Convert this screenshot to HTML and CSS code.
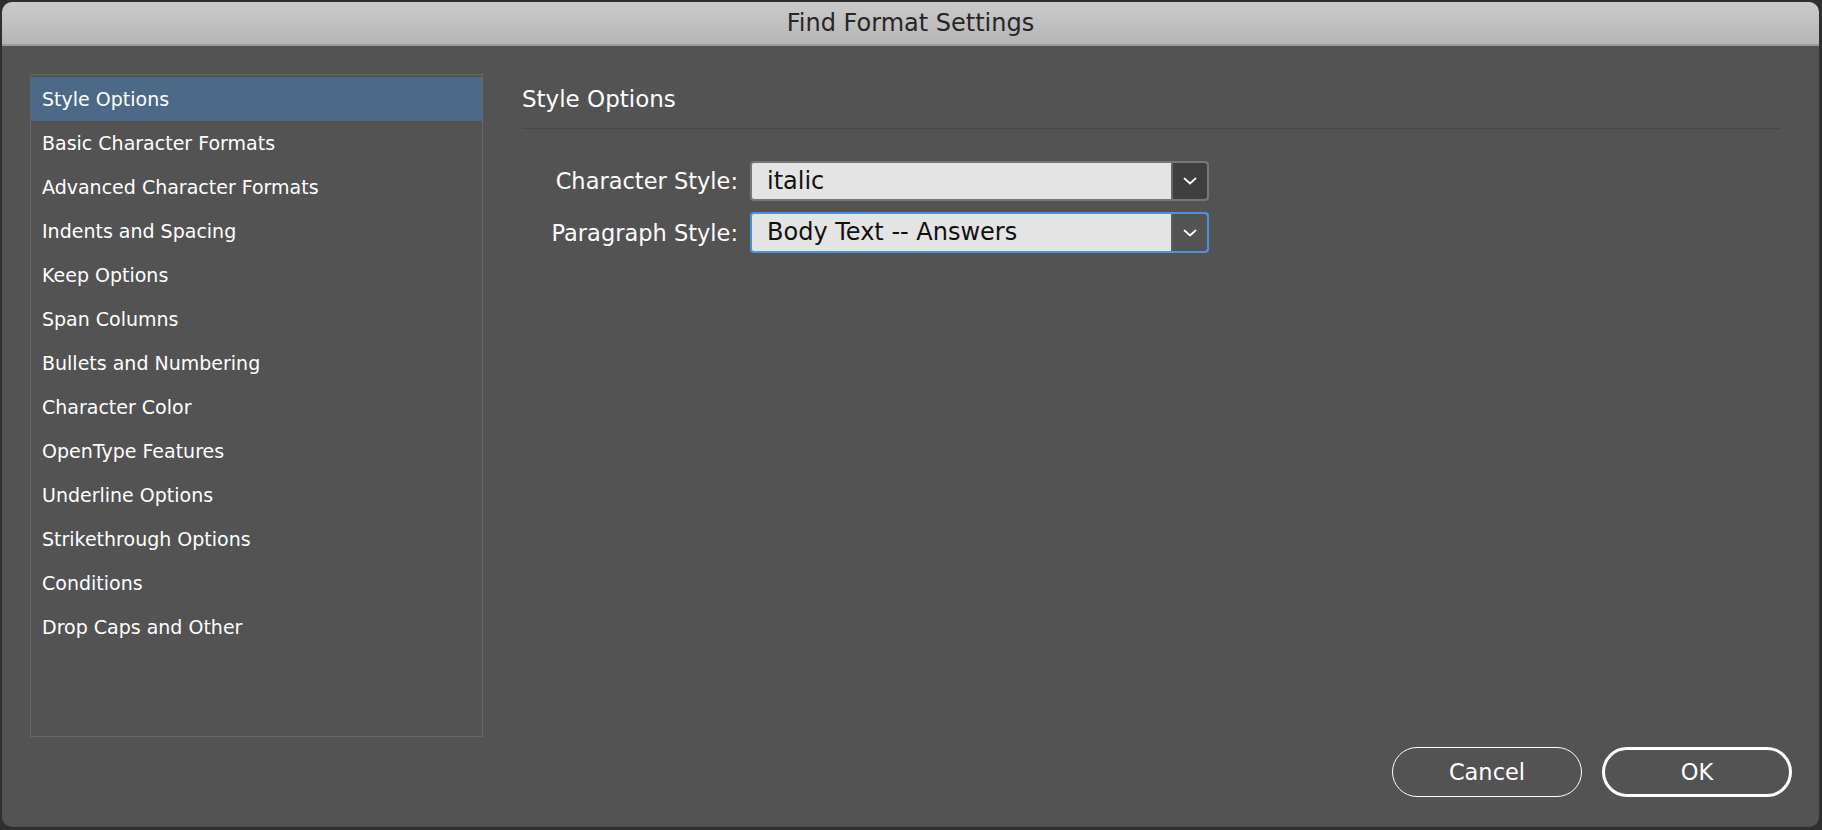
FILE: index.html
```html
<!DOCTYPE html>
<html lang="en">
<head>
    <meta charset="UTF-8">
    <meta name="viewport" content="width=device-width, initial-scale=1.0">
    <title>Find Format Settings</title>
    <link rel="stylesheet" href="styles.css">
</head>
<body>
    <div class="dialog">
        <div class="titlebar">Find Format Settings</div>
        <div class="dialog-body">
            <ul class="sidebar">
                <li class="sidebar-li active">Style Options</li>
                <li class="sidebar-li">Basic Character Formats</li>
                <li class="sidebar-li">Advanced Character Formats</li>
                <li class="sidebar-li">Indents and Spacing</li>
                <li class="sidebar-li">Keep Options</li>
                <li class="sidebar-li">Span Columns</li>
                <li class="sidebar-li">Bullets and Numbering</li>
                <li class="sidebar-li">Character Color</li>
                <li class="sidebar-li">OpenType Features</li>
                <li class="sidebar-li">Underline Options</li>
                <li class="sidebar-li">Strikethrough Options</li>
                <li class="sidebar-li">Conditions</li>
                <li class="sidebar-li">Drop Caps and Other</li>
            </ul>
            <div class="pane">
                <h2 class="pane-title">Style Options</h2>
                <div class="form">
                    <label class="form-label">Character Style:</label>
                    <div class="select">
                        <span class="select-value">italic</span>
                        <span class="select-btn">
                            <svg width="14" height="8" viewBox="0 0 14 8"><polyline points="1.5,1.5 7,6.5 12.5,1.5" fill="none" stroke="#fff" stroke-width="1.8" stroke-linecap="round" stroke-linejoin="round"/></svg>
                        </span>
                    </div>
                    <label class="form-label">Paragraph Style:</label>
                    <div class="select focus">
                        <span class="select-value">Body Text -- Answers</span>
                        <span class="select-btn">
                            <svg width="14" height="8" viewBox="0 0 14 8"><polyline points="1.5,1.5 7,6.5 12.5,1.5" fill="none" stroke="#fff" stroke-width="1.8" stroke-linecap="round" stroke-linejoin="round"/></svg>
                        </span>
                    </div>
                </div>
            </div>
        </div>
        <div class="footer">
            <button class="btn">Cancel</button>
            <button class="btn btn-default">OK</button>
        </div>
    </div>
</body>
</html>
```

FILE: styles.css
```css
html,body{
    margin: 0;
    height: 100%;
}
body{
    background: #2f2f2f;
    font-family: "DejaVu Sans", "Noto Sans", sans-serif;
    overflow: hidden;
}
.dialog{
    margin: 2px 0 0 2px;
    width: 1817px;
    height: 825px;
    background: #535353;
    border-radius: 10px;
    overflow: hidden;
    display: flex;
    flex-direction: column;
}
.titlebar{
    height: 42px;
    line-height: 42px;
    flex: none;
    text-align: center;
    font-size: 24px;
    color: #262626;
    background: linear-gradient(#cacaca, #b6b6b6);
    border-bottom: 2px solid #9c9c9c;
}
.dialog-body{
    display: flex;
    padding: 28px 0 0 28px;
}
.sidebar{
    list-style: none;
    margin: 0;
    padding: 2px 0 0;
    width: 451px;
    height: 659px;
    border: 1px solid #666;
    flex: none;
}
.sidebar-li{
    height: 44px;
    line-height: 44px;
    padding-left: 11px;
    font-size: 19px;
    color: #fff;
}
.sidebar-li.active{
    background: #4c6a87;
}
.pane{
    margin-left: 39px;
    width: 1258px;
}
.pane-title{
    margin: 10px 0 0;
    padding: 0 0 14px;
    height: 30px;
    line-height: 30px;
    font-size: 23px;
    font-weight: normal;
    color: #fff;
    border-bottom: 1px solid #474747;
}
.form{
    display: grid;
    grid-template-columns: 216px 459px;
    column-gap: 12px;
    row-gap: 11px;
    margin-top: 32px;
    align-items: center;
}
.form-label{
    text-align: right;
    font-size: 22.5px;
    color: #fff;
}
.select{
    display: flex;
    height: 36px;
    border: 2px solid #777;
    border-radius: 4px;
    background: #e4e4e4;
    overflow: hidden;
}
.select.focus{
    height: 37px;
    border-color: #4a92e0;
}
.select-value{
    flex: 1;
    padding-left: 15px;
    line-height: 36px;
    font-size: 24px;
    color: #111;
}
.select-btn{
    width: 34px;
    flex: none;
    display: flex;
    align-items: center;
    justify-content: center;
    background: #3f3f3f;
    border-left: 2px solid #666;
}
.select.focus .select-btn{
    background: #535353;
    border-left-color: #5e5e5e;
}
.footer{
    display: flex;
    justify-content: flex-end;
    gap: 20px;
    margin-top: 10px;
    padding-right: 27px;
}
.btn{
    width: 190px;
    height: 50px;
    border: 1.5px solid #fff;
    border-radius: 25px;
    background: transparent;
    color: #fff;
    font-family: "DejaVu Sans", sans-serif;
    font-size: 22.5px;
    padding: 0;
}
.btn-default{
    border-width: 3px;
}
```
